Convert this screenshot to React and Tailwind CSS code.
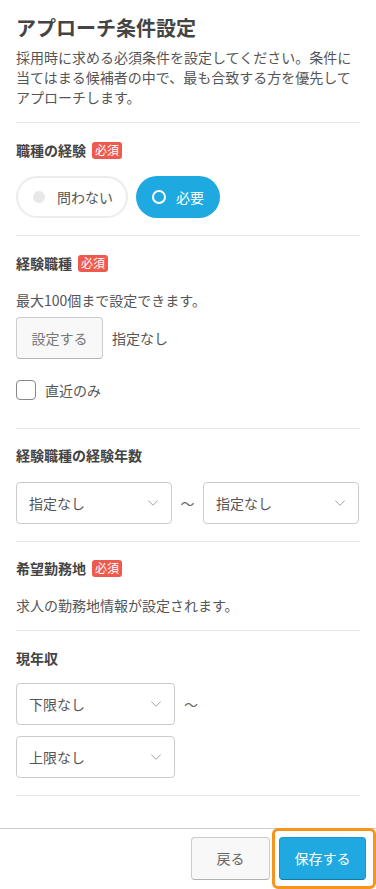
import { ChevronDown } from 'lucide-react';

const font = { fontFamily: '"Noto Sans CJK JP", "Noto Sans", sans-serif' };

function Badge() {
  return (
    <span className="ml-[6px] inline-flex h-[17px] items-center rounded-[3px] bg-[#ef5a4f] px-[3px] text-[12px] font-normal leading-none text-white">
      必須
    </span>
  );
}

function Label({ children, required }) {
  return (
    <div className="flex h-5 items-center text-[14px] font-bold text-[#444]">
      {children}
      {required && <Badge />}
    </div>
  );
}

function Select({ value, width }) {
  return (
    <div
      className={`flex h-[42px] items-center justify-between rounded border border-[#ccc] bg-white pl-[12px] pr-[9px] text-[14px] text-[#555] ${width}`}
    >
      <span>{value}</span>
      <ChevronDown size={18} strokeWidth={1.2} className="text-[#999]" />
    </div>
  );
}

function Divider({ className }) {
  return <div className={`h-px bg-[#e8e8e8] ${className}`} />;
}

export default function App() {
  return (
    <div className="min-h-screen bg-white" style={font}>
      <div className="px-4">
        <h1 className="pt-[14px] text-[20px] font-bold leading-[28px] text-[#444]">アプローチ条件設定</h1>
        <p className="mt-[5px] text-[14px] leading-5 text-[#555]">
          採用時に求める必須条件を設定してください。条件に当てはまる候補者の中で、最も合致する方を優先してアプローチします。
        </p>
        <Divider className="mt-[15px]" />

        <div className="mt-[17px]">
          <Label required>職種の経験</Label>
        </div>
        <div className="mt-4 flex gap-2">
          <div className="flex h-[42px] w-[112px] items-center rounded-full border-2 border-[#ececec] bg-white pl-[15px] text-[14px] text-[#555]">
            <span className="h-3 w-3 rounded-full bg-[#e8e8e8]" />
            <span className="ml-[12px]">問わない</span>
          </div>
          <div className="flex h-[42px] w-[84px] items-center rounded-full bg-[#1fa9e1] pl-4 text-[14px] text-white">
            <span className="h-[14px] w-[14px] rounded-full border-[2.5px] border-white" />
            <span className="ml-[10px]">必要</span>
          </div>
        </div>
        <Divider className="mt-[17px]" />

        <div className="mt-[17px]">
          <Label required>経験職種</Label>
        </div>
        <p className="mt-[17px] text-[14px] leading-5 text-[#555]">最大100個まで設定できます。</p>
        <div className="mt-[7px] flex items-center">
          <button className="h-[42px] w-[87px] rounded border border-[#ccc] border-b-[#b5b5b5] bg-[#f8f8f8] text-[14px] text-[#777]">
            設定する
          </button>
          <span className="ml-[9px] text-[14px] text-[#555]">指定なし</span>
        </div>
        <div className="mt-[21px] flex h-5 items-center">
          <span className="h-5 w-5 rounded border-[1.5px] border-[#888] bg-white" />
          <span className="ml-[9px] text-[14px] text-[#555]">直近のみ</span>
        </div>
        <Divider className="mt-[28px]" />

        <div className="mt-4">
          <Label>経験職種の経験年数</Label>
        </div>
        <div className="mt-[17px] flex items-center">
          <Select value="指定なし" width="w-[156px]" />
          <span className="w-[31px] text-center text-[14px] text-[#666]">〜</span>
          <Select value="指定なし" width="w-[156px]" />
        </div>
        <Divider className="mt-[17px]" />

        <div className="mt-4">
          <Label required>希望勤務地</Label>
        </div>
        <p className="mt-[17px] text-[14px] leading-5 text-[#555]">求人の勤務地情報が設定されます。</p>
        <Divider className="mt-[15px]" />

        <div className="mt-[17px]">
          <Label>現年収</Label>
        </div>
        <div className="mt-[15px] flex items-center">
          <Select value="下限なし" width="w-[159px]" />
          <span className="ml-[9px] text-[14px] text-[#666]">〜</span>
        </div>
        <div className="mt-[11px]">
          <Select value="上限なし" width="w-[159px]" />
        </div>
        <Divider className="mt-[17px]" />
      </div>

      <div className="mt-[32px] flex h-[61px] items-start justify-end border-t border-[#ccc]">
        <button className="mt-2 h-[43px] w-[79px] rounded border border-[#ccc] border-b-[#b0b0b0] bg-[#f8f8f8] text-[14px] text-[#666]">
          戻る
        </button>
        <div className="ml-[2px] mt-[-1px] rounded-[6px] border-[3px] border-[#f7941d] pb-[6px] pl-1 pr-[7px] pt-[6px]">
          <button className="h-[43px] w-[87px] rounded border border-[#1a97cc] border-b-[#137aa8] bg-[#20a9e1] text-[14px] text-white">
            保存する
          </button>
        </div>
      </div>
    </div>
  );
}
